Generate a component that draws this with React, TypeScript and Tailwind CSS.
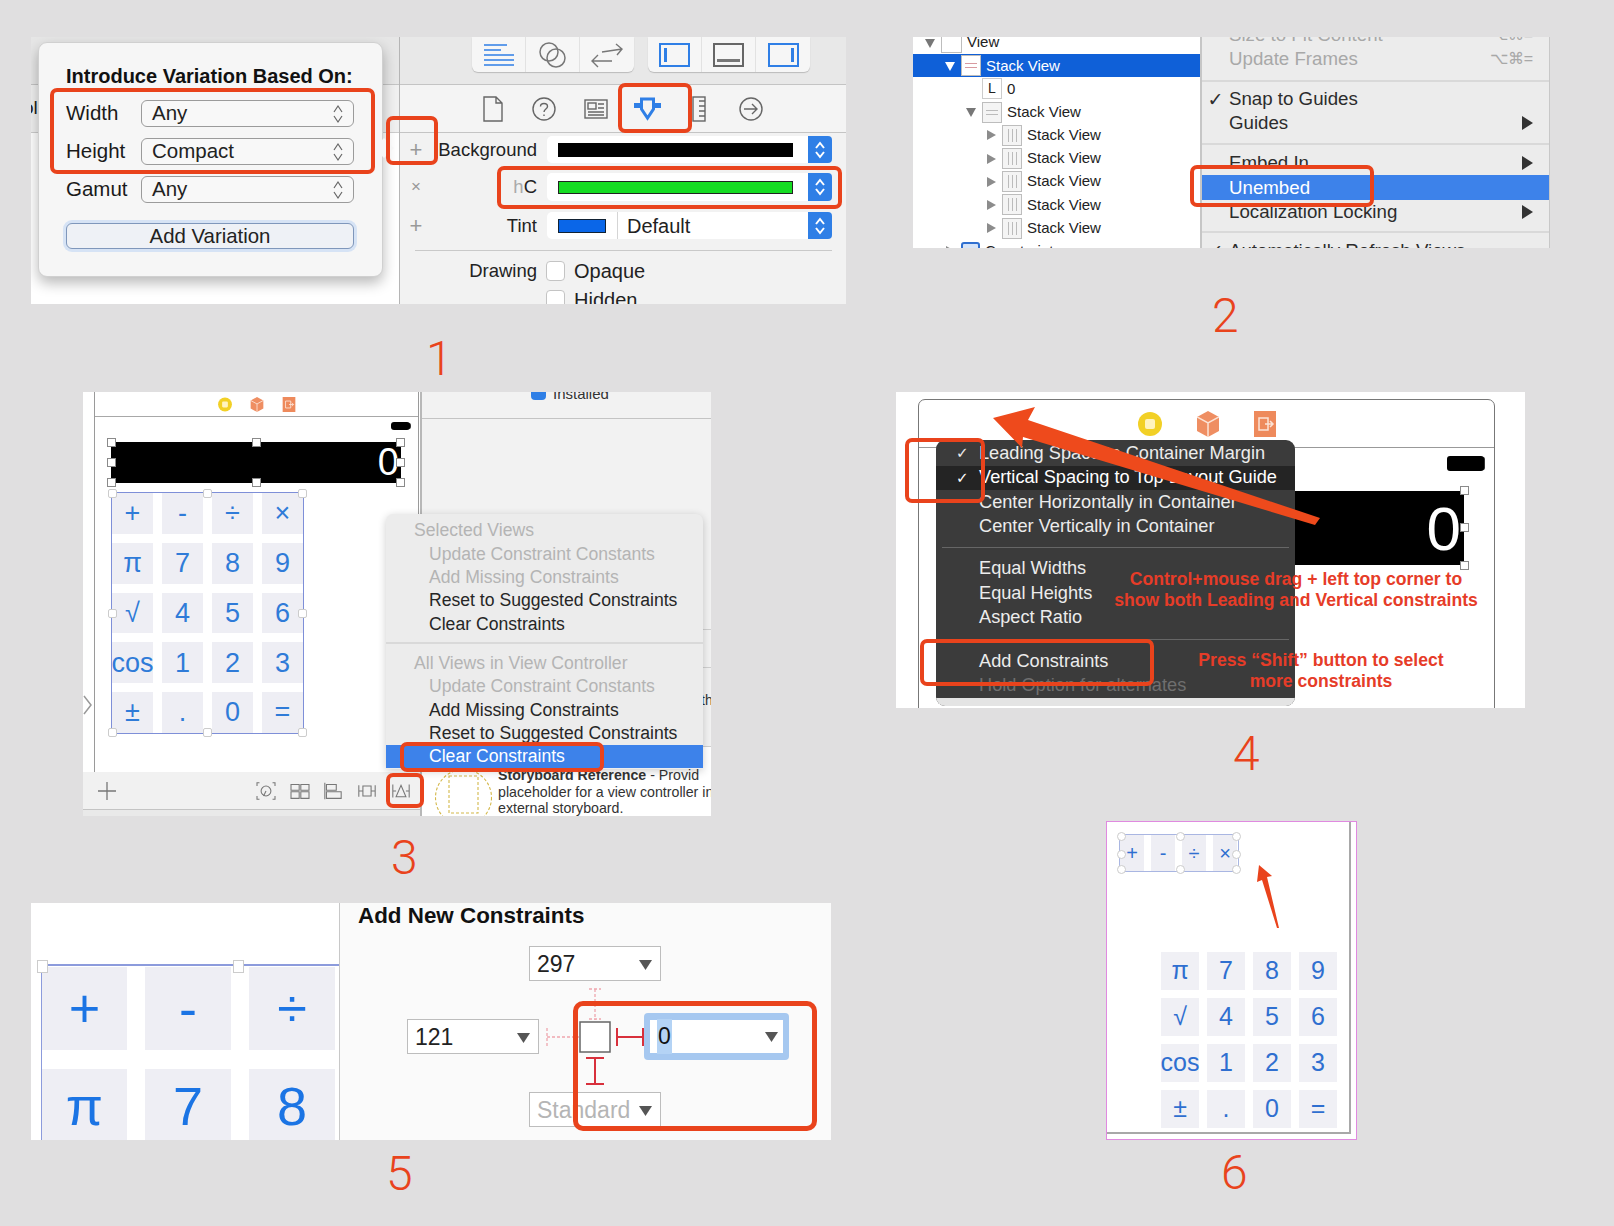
import type { ReactNode } from 'react';

const RED = '#e9431c';

// Red annotation rectangle drawn over the screenshots
function RedBox({ className }: { className: string }) {
  return <div className={`absolute border-[4px] border-[#e9431c] rounded-[7px] ${className}`} />;
}

function Handle({ className }: { className: string }) {
  return <div className={`absolute w-[9px] h-[9px] bg-white border border-[#8a8a8a] ${className}`} />;
}

function Triangle({ dir, color = '#777' }: { dir: 'down' | 'right'; color?: string }) {
  return (
    <svg width="12" height="12" viewBox="0 0 12 12" className="shrink-0">
      <polygon points={dir === 'down' ? '1,2 11,2 6,11' : '2,1 11,6 2,11'} fill={color} />
    </svg>
  );
}

function Stepper() {
  return (
    <div className="w-[24px] h-full bg-[#2f7fe6] rounded-r-[4px] flex items-center justify-center">
      <svg width="12" height="20" viewBox="0 0 12 20" fill="none" stroke="white" strokeWidth="2">
        <path d="M2 8 L6 3 L10 8" />
        <path d="M2 12 L6 17 L10 12" />
      </svg>
    </div>
  );
}

function UpDown() {
  return (
    <svg width="12" height="20" viewBox="0 0 12 20" fill="none" stroke="#666" strokeWidth="1.2">
      <path d="M2 8 L6 2 L10 8" />
      <path d="M2 12 L6 18 L10 12" />
    </svg>
  );
}

function VarRow({ label, value }: { label: string; value: string }) {
  return (
    <div className="flex items-center h-[27px]">
      <span className="w-[75px] text-[20.5px] text-[#1a1a1a]">{label}</span>
      <div className="w-[213px] h-full flex items-center justify-between pl-[10px] pr-[9px] bg-[#f8f8f8] border border-[#9b9b9b] rounded-[6px] text-[20.5px] text-[#222]">
        {value}
        <UpDown />
      </div>
    </div>
  );
}

function Panel1() {
  const tool = 'w-[54px] h-full flex items-center justify-center border-r border-[#e2e2e2] last:border-r-0';
  const tab = 'w-[51.6px] flex items-center justify-center';
  return (
    <div className="absolute left-[31px] top-[37px] w-[815px] h-[267px] overflow-hidden bg-white flex">
      <div className="w-[368px] flex flex-col">
        <div className="h-[48px] bg-[#e6e6e6] border-b border-[#c4c4c4]" />
        <div className="h-[48px] bg-[#f0f0f0] border-b border-[#cdcdcd] flex items-center text-[19px] text-[#222] -ml-[8px]">ol</div>
        <div className="flex-1 bg-white" />
      </div>
      <div className="flex-1 border-l border-[#b5b5b5] flex flex-col bg-[#f2f2f2]">
        <div className="h-[48px] shrink-0 bg-[#e8e8e8] border-b border-[#c4c4c4] flex gap-[14px] pl-[72px] items-start">
          <div className="h-[35px] flex bg-[#f6f6f6] rounded-b-[6px] shadow-[0_1px_1px_#bbb]">
            <div className={tool}>
              <svg width="32" height="24" viewBox="0 0 32 24" stroke="#2f7fe6" strokeWidth="1.6" fill="none">
                <path d="M1 2 H24 M1 7 H18 M1 12 H31 M1 17 H31 M1 22 H31" />
              </svg>
            </div>
            <div className={tool}>
              <svg width="30" height="28" viewBox="0 0 30 28" stroke="#777" strokeWidth="1.5" fill="none">
                <circle cx="11" cy="11" r="9" />
                <circle cx="18" cy="17" r="9" />
              </svg>
            </div>
            <div className={tool}>
              <svg width="32" height="26" viewBox="0 0 32 26" stroke="#777" strokeWidth="1.4" fill="none">
                <path d="M31 7 L11 10 M25 2 L31 7 L26 13 M1 19 L21 19 M7 13 L1 19 L7 25" />
              </svg>
            </div>
          </div>
          <div className="h-[35px] flex bg-[#f6f6f6] rounded-b-[6px] shadow-[0_1px_1px_#bbb]">
            <div className={tool}>
              <div className="w-[31px] h-[24px] border-2 border-[#2f7fe6] flex">
                <div className="w-[3px] bg-[#2f7fe6] ml-[3px] my-[3px]" />
              </div>
            </div>
            <div className={tool}>
              <div className="w-[31px] h-[24px] border-2 border-[#666] flex items-end">
                <div className="w-full h-[3px] bg-[#777] mx-[2px] mb-[3px]" />
              </div>
            </div>
            <div className={tool}>
              <div className="w-[31px] h-[24px] border-2 border-[#2f7fe6] flex justify-end">
                <div className="w-[3px] bg-[#2f7fe6] mr-[3px] my-[3px]" />
              </div>
            </div>
          </div>
        </div>
        <div className="h-[48px] shrink-0 bg-[#f4f4f4] border-b border-[#c4c4c4] flex pl-[67px]">
          <div className={tab}>
            <svg width="20" height="26" viewBox="0 0 20 26" fill="none" stroke="#666" strokeWidth="1.4">
              <path d="M1 1 H13 L19 7 V25 H1 Z M13 1 V7 H19" />
            </svg>
          </div>
          <div className={tab}>
            <svg width="24" height="24" viewBox="0 0 24 24" fill="none" stroke="#666" strokeWidth="1.4">
              <circle cx="12" cy="12" r="11" />
              <path d="M8.5 9.5 C8.5 5.5 15.5 5.5 15.5 9.5 C15.5 12 12 12 12 15 M12 17.5 V19" />
            </svg>
          </div>
          <div className={tab}>
            <svg width="24" height="20" viewBox="0 0 24 20" fill="none" stroke="#666" strokeWidth="1.4">
              <rect x="1" y="1" width="22" height="18" />
              <rect x="4" y="4" width="8" height="6" />
              <path d="M14 5 H20 M14 9 H20 M4 13 H20 M4 16 H20" />
            </svg>
          </div>
          <div className={tab}>
            <svg width="27" height="24" viewBox="0 0 27 24">
              <path d="M0 6 H7 V11 H0 Z M20 6 H27 V11 H20 Z" fill="#2f7fe6" />
              <path d="M7.5 2 H19.5 V12 L13.5 21 L7.5 12 Z" fill="#f4f4f4" stroke="#2f7fe6" strokeWidth="3" />
            </svg>
          </div>
          <div className={tab}>
            <svg width="14" height="26" viewBox="0 0 14 26" fill="none" stroke="#666" strokeWidth="1.4">
              <rect x="1" y="1" width="12" height="24" />
              <path d="M7 5 H13 M7 10 H13 M7 15 H13 M7 20 H13" />
            </svg>
          </div>
          <div className={tab}>
            <svg width="24" height="24" viewBox="0 0 24 24" fill="none" stroke="#666" strokeWidth="1.4">
              <circle cx="12" cy="12" r="11" />
              <path d="M5 12 H18 M13 7 L18 12 L13 17" />
            </svg>
          </div>
        </div>

        <div className="flex items-center h-[27px] shrink-0 mt-[3px] text-[18.5px] text-[#222]">
          <span className="w-[32px] text-center text-[#999] text-[22px]">+</span>
          <span className="w-[105px] text-right">Background</span>
          <div className="ml-[10px] w-[285px] h-full bg-white rounded-[5px] flex items-center pl-[11px]">
            <div className="w-[235px] h-[14px] bg-black" />
            <div className="ml-auto h-full"><Stepper /></div>
          </div>
        </div>
        <div className="flex items-center h-[28px] shrink-0 mt-[10px] text-[18.5px] text-[#222]">
          <span className="w-[32px] text-center text-[#999] text-[17px]">×</span>
          <span className="w-[105px] text-right"><span className="text-[#aaa]">h</span>C</span>
          <div className="ml-[10px] w-[285px] h-full bg-white rounded-[5px] flex items-center pl-[11px]">
            <div className="w-[235px] h-[13px] bg-[#15dc22] border border-[#222]" />
            <div className="ml-auto h-full"><Stepper /></div>
          </div>
        </div>
        <div className="flex items-center h-[27px] shrink-0 mt-[11px] text-[18.5px] text-[#222]">
          <span className="w-[32px] text-center text-[#999] text-[22px]">+</span>
          <span className="w-[105px] text-right">Tint</span>
          <div className="ml-[10px] w-[285px] h-full bg-white rounded-[5px] flex items-center pl-[11px]">
            <div className="w-[48px] h-[14px] bg-[#0a66e8] border border-[#123]" />
            <div className="ml-[11px] h-full border-l border-[#d5d5d5] pl-[9px] flex items-center text-[20px]">Default</div>
            <div className="ml-auto h-full"><Stepper /></div>
          </div>
        </div>
        <div className="ml-[15px] mt-[11px] w-[417px] h-[1px] shrink-0 bg-[#c9c9c9]" />
        <div className="flex items-center h-[20px] shrink-0 mt-[10px] text-[18.5px] text-[#222]">
          <span className="w-[137px] text-right">Drawing</span>
          <div className="ml-[9px] w-[19px] h-[20px] bg-white border border-[#c4c4c4] rounded-[4px]" />
          <span className="ml-[9px] text-[20px]">Opaque</span>
        </div>
        <div className="flex items-center h-[20px] shrink-0 mt-[9px] ml-[146px] text-[20px] text-[#222]">
          <div className="w-[19px] h-[20px] bg-white border border-[#c4c4c4] rounded-[4px]" />
          <span className="ml-[9px]">Hidden</span>
        </div>
      </div>

      {/* Size class popover */}
      <div className="absolute left-[7px] top-[5px] w-[345px] h-[235px] bg-[#f6f6f6] rounded-[9px] border border-[#d0d0d0] shadow-[0_6px_14px_rgba(0,0,0,0.28)] flex flex-col pl-[27px] pt-[22px]">
        <div className="text-[20px] leading-[22px] font-bold text-[#111] whitespace-nowrap">Introduce Variation Based On:</div>
        <div className="mt-[13px] flex flex-col gap-[11px]">
          <VarRow label="Width" value="Any" />
          <VarRow label="Height" value="Compact" />
          <VarRow label="Gamut" value="Any" />
        </div>
        <div className="mt-[20px] w-[288px] h-[26px] bg-[#eef1f6] border border-[#7f97bb] rounded-[6px] shadow-[0_0_0_3px_#d6e3f5] flex items-center justify-center text-[20.4px] text-[#222]">
          Add Variation
        </div>
      </div>
      <div className="absolute left-[346px] top-[104px] w-[14px] h-[14px] rotate-45 bg-[#f6f6f6]" />

      <RedBox className="left-[19px] top-[51px] w-[325px] h-[86px]" />
      <RedBox className="left-[355px] top-[79px] w-[52px] h-[49px]" />
      <RedBox className="left-[587px] top-[46px] w-[74px] h-[50px]" />
      <RedBox className="left-[466px] top-[129px] w-[345px] h-[43px]" />
    </div>
  );
}

function StackIcon({ vertical, selected }: { vertical?: boolean; selected?: boolean }) {
  return (
    <div
      className={`w-[20px] h-[21px] shrink-0 border border-[#bdbdbd] flex gap-[3px] p-[3px] ${
        vertical ? 'flex-col justify-center' : 'justify-center'
      } ${selected ? 'bg-white' : 'bg-[#f4f4f4]'}`}
    >
      <div className={`${vertical ? 'h-[1px] w-full' : 'w-[1px] h-full'} ${selected ? 'bg-[#d89aa0]' : 'bg-[#bbb]'}`} />
      <div className={`${vertical ? 'h-[1px] w-full' : 'w-[1px] h-full'} ${selected ? 'bg-[#d89aa0]' : 'bg-[#bbb]'}`} />
      {!vertical && <div className="w-[1px] h-full bg-[#bbb]" />}
    </div>
  );
}

function TreeRow({ pad, children, selected }: { pad: string; children: ReactNode; selected?: boolean }) {
  return (
    <div className={`h-[23.2px] shrink-0 flex items-center gap-[5px] text-[15px] ${pad} ${selected ? 'bg-[#0f60d8] text-white' : 'text-[#222]'}`}>
      {children}
    </div>
  );
}

function Arrow() {
  return (
    <svg width="11" height="14" viewBox="0 0 11 14" className="ml-auto">
      <polygon points="0,0 11,7 0,14" fill="#333" />
    </svg>
  );
}

function MenuRow({ children, dim, check, arrow, active }: { children: ReactNode; dim?: boolean; check?: boolean; arrow?: boolean; active?: boolean }) {
  return (
    <div
      className={`h-[24.3px] shrink-0 flex items-center pr-[16px] text-[18.7px] whitespace-nowrap ${
        active ? 'bg-[#3d82ea] text-white' : dim ? 'text-[#a8a8a8]' : 'text-[#2c2c2c]'
      }`}
    >
      <span className="w-[27px] text-center font-['DejaVu_Sans',sans-serif] font-bold text-[19px]">{check ? '✓' : ''}</span>
      {children}
      {arrow && <Arrow />}
    </div>
  );
}

function Panel2() {
  return (
    <div className="absolute left-[913px] top-[37px] w-[637px] h-[211px] overflow-hidden flex bg-white">
      <div className="w-[289px] flex flex-col -mt-[6px] border-r-2 border-[#c6c6c6] bg-white">
        <TreeRow pad="pl-[11px]">
          <Triangle dir="down" />
          <div className="w-[21px] h-[21px] bg-white border border-[#bdbdbd]" />
          View
        </TreeRow>
        <TreeRow pad="pl-[31px]" selected>
          <Triangle dir="down" color="#fff" />
          <StackIcon vertical selected />
          Stack View
        </TreeRow>
        <TreeRow pad="pl-[69px]">
          <div className="w-[20px] h-[21px] bg-white border border-[#ccc] flex items-center justify-center text-[14px]">L</div>
          0
        </TreeRow>
        <TreeRow pad="pl-[52px]">
          <Triangle dir="down" />
          <StackIcon vertical />
          Stack View
        </TreeRow>
        {[0, 1, 2, 3, 4].map((i) => (
          <TreeRow pad="pl-[72px]" key={i}>
            <Triangle dir="right" color="#8c8c8c" />
            <StackIcon />
            Stack View
          </TreeRow>
        ))}
        <TreeRow pad="pl-[31px]">
          <Triangle dir="right" color="#8c8c8c" />
          <div className="w-[19px] h-[19px] bg-[#d6e4f8] border-2 border-[#2f6fd0] rounded-[3px]" />
          Constraints
        </TreeRow>
      </div>
      <div className="flex-1 bg-[#ececec] flex flex-col -mt-[14px] border-r border-[#c8c8c8]">
        <MenuRow dim>
          Size to Fit Content<span className="ml-auto text-[16px]">⌥⌘=</span>
        </MenuRow>
        <MenuRow dim>
          Update Frames<span className="ml-auto text-[16px]">⌥⌘=</span>
        </MenuRow>
        <div className="mt-[8px] mb-[5px] h-[2px] bg-[#d9d9d9] shrink-0" />
        <MenuRow check>Snap to Guides</MenuRow>
        <MenuRow arrow>Guides</MenuRow>
        <div className="mt-[8px] mb-[6px] h-[2px] bg-[#d9d9d9] shrink-0" />
        <MenuRow arrow>Embed In</MenuRow>
        <MenuRow active>Unembed</MenuRow>
        <MenuRow arrow>Localization Locking</MenuRow>
        <div className="mt-[7px] mb-[6px] h-[2px] bg-[#d9d9d9] shrink-0" />
        <MenuRow check>Automatically Refresh Views</MenuRow>
      </div>
      <RedBox className="left-[277px] top-[128px] w-[184px] h-[42px]" />
    </div>
  );
}

const CALC_TOP = ['+', '-', '÷', '×'];
const CALC_BODY = ['π', '7', '8', '9', '√', '4', '5', '6', 'cos', '1', '2', '3', '±', '.', '0', '='];

function DeviceDots({ big }: { big?: boolean }) {
  return (
    <div className={`flex justify-center items-center ${big ? 'gap-[35px]' : 'gap-[18px]'}`}>
      <svg width={big ? 24 : 14} height={big ? 26 : 15} viewBox="0 0 24 26">
        <circle cx="12" cy="13" r="12" fill="#f2d026" />
        <rect x="7" y="8" width="10" height="10" rx="2" fill="#fff3c0" />
      </svg>
      <svg width={big ? 22 : 14} height={big ? 26 : 15} viewBox="0 0 22 26">
        <polygon points="11,0 22,6 22,20 11,26 0,20 0,6" fill="#ef8e62" />
        <path d="M0 6 L11 12 L22 6 M11 12 V26" stroke="#fbe3d6" strokeWidth="1.5" fill="none" />
      </svg>
      <svg width={big ? 22 : 14} height={big ? 26 : 15} viewBox="0 0 22 26">
        <rect width="22" height="26" fill="#ee8a5c" />
        <path d="M5 7 H14 V19 H5 Z M11 13 H19 M16 10 L19 13 L16 16" stroke="#fbe3d6" strokeWidth="1.5" fill="none" />
      </svg>
    </div>
  );
}

function Battery({ className }: { className: string }) {
  return <div className={`bg-black rounded-[3px] shadow-[2px_0_0_-1px_#333] ${className}`} />;
}

function BarIcon({ children }: { children: ReactNode }) {
  return (
    <div className="w-[33.7px] flex items-center justify-center">
      <svg width="20" height="18" viewBox="0 0 24 22" fill="none" stroke="#777" strokeWidth="1.3">
        {children}
      </svg>
    </div>
  );
}

function MenuLine({ children, dim, indent }: { children: ReactNode; dim?: boolean; indent?: boolean }) {
  return (
    <div className={`h-[23.3px] flex items-center text-[17.6px] whitespace-nowrap ${indent ? 'pl-[43px]' : 'pl-[28px]'} ${dim ? 'text-[#b4b4b4]' : 'text-[#262626]'}`}>
      {children}
    </div>
  );
}

function Panel3() {
  return (
    <div className="absolute left-[83px] top-[392px] w-[628px] h-[424px] overflow-hidden bg-white flex">
      <div className="w-[337px] shrink-0 flex flex-col">
        <div className="h-[380px] ml-[11px] mr-[1px] border-l border-r border-[#9a9a9a] bg-white">
          <div className="h-[25px] border-b border-[#a8a8a8] flex items-center justify-center">
            <DeviceDots />
          </div>
          <div className="flex justify-end pr-[8px] pt-[5px]">
            <Battery className="w-[19px] h-[8px]" />
          </div>
          <div className="relative ml-[16px] mt-[12px] w-[290px] h-[41px] bg-black flex items-center justify-end pr-[2px] text-white text-[38px] font-light">
            0
            <Handle className="-left-[4px] -top-[4px]" />
            <Handle className="left-[141px] -top-[4px]" />
            <Handle className="-right-[4px] -top-[4px]" />
            <Handle className="-left-[4px] top-[16px]" />
            <Handle className="-right-[4px] top-[16px]" />
            <Handle className="-left-[4px] -bottom-[4px]" />
            <Handle className="left-[141px] -bottom-[4px]" />
            <Handle className="-right-[4px] -bottom-[4px]" />
          </div>
          <div className="relative ml-[16px] mt-[9px] w-[193px] h-[242px] border border-[#7e8fd8]">
            <div className="grid grid-cols-[repeat(4,41px)] auto-rows-[40.8px] gap-[9px] text-[27px] text-[#2f7bd8]">
              {[...CALC_TOP, ...CALC_BODY].map((k) => (
                <div key={k} className="bg-[#eeeef4] flex items-center justify-center whitespace-nowrap">{k}</div>
              ))}
            </div>
            <Handle className="-left-[4px] -top-[4px] rounded-[2px] border-[#ccc]" />
            <Handle className="left-[91px] -top-[4px] rounded-[2px] border-[#ccc]" />
            <Handle className="-right-[4px] -top-[4px] rounded-[2px] border-[#ccc]" />
            <Handle className="-left-[4px] top-[116px] rounded-[2px] border-[#ccc]" />
            <Handle className="-right-[4px] top-[116px] rounded-[2px] border-[#ccc]" />
            <Handle className="-left-[4px] -bottom-[4px] rounded-[2px] border-[#ccc]" />
            <Handle className="left-[91px] -bottom-[4px] rounded-[2px] border-[#ccc]" />
            <Handle className="-right-[4px] -bottom-[4px] rounded-[2px] border-[#ccc]" />
          </div>
        </div>
        <div className="h-[38px] bg-[#f1f1f1] border-b border-[#c4c4c4] flex items-center pl-[15px]">
          <svg width="18" height="18" viewBox="0 0 18 18" stroke="#777" strokeWidth="1.3">
            <path d="M9 0 V18 M0 9 H18" />
          </svg>
          <div className="ml-[133px] flex">
            <BarIcon>
              <path d="M4 1 H1 V5 M20 1 H23 V5 M4 21 H1 V17 M20 21 H23 V17" />
              <circle cx="12" cy="11" r="6" />
              <path d="M12 11 L9 17" />
            </BarIcon>
            <BarIcon>
              <path d="M1 3 H11 V10 H1 Z M13 3 H23 V10 H13 Z M1 12 H11 V20 H1 Z M13 12 H23 V20 H13 Z" />
            </BarIcon>
            <BarIcon>
              <path d="M2 1 V21 M4 3 H16 V10 H4 Z M4 12 H22 V20 H4 Z" />
            </BarIcon>
            <BarIcon>
              <path d="M2 4 V18 M22 4 V18 M2 11 H7 M17 11 H22 M7 5 H17 V17 H7 Z" />
            </BarIcon>
            <BarIcon>
              <path d="M2 3 V19 M22 3 V19 M2 11 H6 M18 11 H22 M12 4 L18 18 H6 Z" />
            </BarIcon>
          </div>
        </div>
        <div className="flex-1 bg-[#e9e9e9]" />
      </div>

      <div className="flex-1 flex flex-col border-l-2 border-[#b8b8b8] bg-[#f2f2f2]">
        <div className="h-[27px] shrink-0 border-b border-[#c4c4c4] overflow-hidden flex gap-[7px] pl-[109px] items-start text-[15px] text-[#333]">
          <div className="w-[15px] h-[15px] -mt-[7px] rounded-[4px] bg-[#2f7fe6]" />
          <span className="-mt-[9px]">Installed</span>
        </div>
        <div className="h-[211px] shrink-0 border-b border-[#d0d0d0]" />
        <div className="h-[38px] shrink-0 border-b border-[#d0d0d0]" />
        <div className="h-[79px] shrink-0 border-b border-[#d0d0d0] pl-[279px] pt-[22px] text-[14px] text-[#333]">th</div>
        <div className="flex-1 bg-white flex gap-[6px] pl-[13px] pt-[20px] whitespace-nowrap">
          <svg width="57" height="57" viewBox="0 0 57 57" className="shrink-0 mt-[2px]" fill="none" stroke="#d4b84a" strokeWidth="1.1">
            <circle cx="28.5" cy="28.5" r="28" strokeDasharray="3 2" />
            <rect x="14" y="7" width="29" height="37" strokeDasharray="3 2" />
          </svg>
          <div className="text-[14.2px] leading-[16.5px] text-[#333]">
            <div><span className="font-bold">Storyboard Reference</span> - Provid</div>
            <div>placeholder for a view controller in</div>
            <div>external storyboard.</div>
          </div>
        </div>
      </div>

      {/* Resolve auto layout issues menu */}
      <div className="absolute left-[303px] top-[122px] w-[317px] h-[255px] bg-[#ececec] rounded-t-[7px] shadow-[0_2px_8px_rgba(0,0,0,0.2)] flex flex-col pt-[5px]">
        <MenuLine dim>Selected Views</MenuLine>
        <MenuLine dim indent>Update Constraint Constants</MenuLine>
        <MenuLine dim indent>Add Missing Constraints</MenuLine>
        <MenuLine indent>Reset to Suggested Constraints</MenuLine>
        <MenuLine indent>Clear Constraints</MenuLine>
        <div className="my-[7px] h-[2px] bg-[#d9d9d9]" />
        <MenuLine dim>All Views in View Controller</MenuLine>
        <MenuLine dim indent>Update Constraint Constants</MenuLine>
        <MenuLine indent>Add Missing Constraints</MenuLine>
        <MenuLine indent>Reset to Suggested Constraints</MenuLine>
        <div className="h-[23.3px] flex items-center pl-[43px] text-[17.6px] text-white bg-[#3d82ea]">Clear Constraints</div>
      </div>
      <svg width="10" height="20" viewBox="0 0 10 20" className="absolute left-0 top-[303px]" fill="none" stroke="#999" strokeWidth="1.5">
        <path d="M1 1 L8 10 L1 19" />
      </svg>
      <RedBox className="left-[317px] top-[350px] w-[204px] h-[30px]" />
      <RedBox className="left-[303px] top-[381px] w-[38px] h-[35px]" />
    </div>
  );
}

function DarkRow({ children, check, active, dim }: { children: ReactNode; check?: boolean; active?: boolean; dim?: boolean }) {
  return (
    <div
      className={`h-[24.6px] shrink-0 flex items-center text-[18.2px] whitespace-nowrap ${active ? 'bg-[#242424] text-white' : dim ? 'text-[#6f6f6f]' : 'text-[#ececec]'}`}
    >
      <span className="w-[43px] pl-[20px] font-['DejaVu_Sans',sans-serif] text-[15px]">{check ? '✓' : ''}</span>
      {children}
    </div>
  );
}

function Panel4() {
  return (
    <div className="absolute left-[896px] top-[392px] w-[629px] h-[316px] overflow-hidden bg-white">
      <div className="ml-[22px] mt-[7px] w-[577px] h-[400px] border border-[#777] rounded-t-[7px]">
        <div className="h-[48px] border-b border-[#999] flex items-center justify-center">
          <DeviceDots big />
        </div>
        <div className="flex justify-end pr-[10px] pt-[8px]">
          <Battery className="w-[37px] h-[15px]" />
        </div>
        <div className="flex justify-end pr-[30px] mt-[20px]">
          <div className="relative w-[300px] h-[74px] bg-black flex items-center justify-end pr-[3px] text-white text-[62px] font-light">
            0
            <Handle className="-right-[5px] -top-[5px]" />
            <Handle className="-right-[5px] top-[32px]" />
            <Handle className="-right-[5px] -bottom-[5px]" />
          </div>
        </div>
      </div>

      {/* Control-drag constraint menu */}
      <div className="absolute left-[40px] top-[48px] w-[359px] h-[266px] bg-[#3b3b3b] rounded-[9px] overflow-hidden flex flex-col pt-[1px]">
        <DarkRow check>Leading Space to Container Margin</DarkRow>
        <DarkRow check active>Vertical Spacing to Top Layout Guide</DarkRow>
        <DarkRow>Center Horizontally in Container</DarkRow>
        <DarkRow>Center Vertically in Container</DarkRow>
        <div className="mx-[6px] mt-[8px] mb-[8px] h-[1px] bg-[#666] shrink-0" />
        <DarkRow>Equal Widths</DarkRow>
        <DarkRow>Equal Heights</DarkRow>
        <DarkRow>Aspect Ratio</DarkRow>
        <div className="mx-[6px] mt-[9px] mb-[9px] h-[1px] bg-[#666] shrink-0" />
        <DarkRow>Add Constraints</DarkRow>
        <DarkRow dim>Hold Option for alternates</DarkRow>
        <div className="mt-auto h-[8px] bg-[#e4e4e4] shrink-0" />
      </div>

      <svg width="629" height="316" className="absolute left-0 top-0">
        <polygon points="97,26 139,15 132,28 424,126 419,133 127,45 126,56" fill="#ee4a1c" />
      </svg>
      <RedBox className="left-[9px] top-[46px] w-[80px] h-[65px]" />
      <RedBox className="left-[24px] top-[247px] w-[234px] h-[47px]" />

      <div className="absolute left-[200px] top-[177px] w-[400px] text-center text-[#e63c28] text-[17.6px] leading-[21px] font-bold whitespace-nowrap">
        <div>Control+mouse drag + left top corner to</div>
        <div>show both Leading and Vertical constraints</div>
      </div>
      <div className="absolute left-[300px] top-[258px] w-[250px] text-center text-[#e63c28] text-[17.6px] leading-[21px] font-bold whitespace-nowrap">
        <div>Press “Shift” button to select</div>
        <div>more constraints</div>
      </div>
    </div>
  );
}

function Dropdown({ value, dim, className }: { value: string; dim?: boolean; className: string }) {
  return (
    <div className={`w-[132px] h-[35px] shrink-0 bg-white border border-[#bdbdbd] flex items-center justify-between pl-[7px] pr-[8px] pt-[2px] text-[23px] ${dim ? 'text-[#b5b5b5]' : 'text-[#222]'} ${className}`}>
      {value}
      <svg width="13" height="10" viewBox="0 0 13 10">
        <polygon points="0,0 13,0 6.5,10" fill="#555" />
      </svg>
    </div>
  );
}

function Panel5() {
  return (
    <div className="absolute left-[31px] top-[903px] w-[800px] h-[237px] overflow-hidden flex bg-white">
      <div className="w-[309px] shrink-0 pt-[61px] pl-[10px] border-r border-[#c8c8c8] shadow-[2px_0_6px_rgba(0,0,0,0.12)] overflow-hidden">
        <div className="relative h-[190px] w-[320px] border-l border-t-2 border-[#8c9bdc] pt-[1px]">
          <div className="grid grid-cols-[85px_86px_86px] grid-rows-[83px_75px] gap-x-[18px] gap-y-[19px] text-[54px] text-[#1b74e4]">
            {['+', '-', '÷', 'π', '7', '8'].map((k) => (
              <div key={k} className="bg-[#eeeef4] flex items-center justify-center">{k}</div>
            ))}
          </div>
          <Handle className="-left-[5px] -top-[6px] w-[11px] h-[13px] border-[#ccc]" />
          <Handle className="left-[191px] -top-[6px] w-[11px] h-[13px] border-[#ccc]" />
        </div>
      </div>
      <div className="flex-1 bg-[#fafafa] flex flex-col">
        <div className="pl-[18px] text-[22.4px] leading-[26px] font-bold text-[#111]">Add New Constraints</div>
        <Dropdown value="297" className="ml-[189px] mt-[17px]" />
        <div className="flex items-center h-[47px] mt-[32px] ml-[67px]">
          <Dropdown value="121" className="" />
          <svg width="105" height="47" viewBox="0 0 105 47" className="shrink-0 overflow-visible" fill="none">
            <rect x="41" y="9" width="30" height="30" fill="#fff" stroke="#666" strokeWidth="1.5" />
            <path d="M50 -24 H62 M56 -24 V7 M50 6 H62" stroke="#efa7ae" strokeWidth="1.3" strokeDasharray="3 2" />
            <path d="M8 15 V33 M8 24 H40" stroke="#efa7ae" strokeWidth="1.3" strokeDasharray="3 2" />
            <path d="M78 15 V33 M78 24 H104 M104 15 V33" stroke="#d8303c" strokeWidth="2" />
            <path d="M47 45 H65 M56 45 V71 M47 71 H65" stroke="#d8303c" strokeWidth="2" />
          </svg>
          <div className="w-[145px] h-[47px] shrink-0 bg-[#a6c8f0] rounded-[4px] px-[6px] py-[7px]">
            <div className="h-full bg-white flex items-center justify-between pl-[7px] pr-[5px] text-[23px] text-[#111]">
              <span className="bg-[#b4d3f5] px-[1px]">0</span>
              <svg width="13" height="10" viewBox="0 0 13 10">
                <polygon points="0,0 13,0 6.5,10" fill="#555" />
              </svg>
            </div>
          </div>
        </div>
        <Dropdown value="Standard" dim className="ml-[189px] mt-[32px]" />
      </div>
      <RedBox className="left-[542px] top-[98px] w-[244px] h-[130px] border-[5px] rounded-[10px]" />
    </div>
  );
}

function Panel6() {
  return (
    <div className="absolute left-[1106px] top-[821px] w-[251px] h-[319px] border border-[#e08ae0] bg-white">
      <div className="w-[244px] h-[312px] border-r-2 border-b-2 border-[#a8a8a8] pt-[12px]">
        <div className="relative ml-[12px] w-[120px] h-[38px] border border-[#a9b6e2]">
          <div className="grid grid-cols-[repeat(4,24px)] gap-[7px] h-full text-[20px] text-[#2f6fd0]">
            {CALC_TOP.map((k) => (
              <div key={k} className="bg-[#eeeef4] flex items-center justify-center">{k}</div>
            ))}
          </div>
          <Handle className="-left-[3px] -top-[3px] w-[6px] h-[6px] rounded-full border-[#ccc]" />
          <Handle className="left-[56px] -top-[3px] w-[6px] h-[6px] rounded-full border-[#ccc]" />
          <Handle className="-right-[3px] -top-[3px] w-[6px] h-[6px] rounded-full border-[#ccc]" />
          <Handle className="-left-[3px] top-[15px] w-[6px] h-[6px] rounded-full border-[#ccc]" />
          <Handle className="-right-[3px] top-[15px] w-[6px] h-[6px] rounded-full border-[#ccc]" />
          <Handle className="-left-[3px] -bottom-[3px] w-[6px] h-[6px] rounded-full border-[#ccc]" />
          <Handle className="left-[56px] -bottom-[3px] w-[6px] h-[6px] rounded-full border-[#ccc]" />
          <Handle className="-right-[3px] -bottom-[3px] w-[6px] h-[6px] rounded-full border-[#ccc]" />
        </div>
        <div className="ml-[54px] mt-[80px] grid grid-cols-[repeat(4,38px)] auto-rows-[38px] gap-[8px] text-[25px] text-[#2f6fd0]">
          {CALC_BODY.map((k) => (
            <div key={k} className="bg-[#f0f0f5] flex items-center justify-center whitespace-nowrap">{k}</div>
          ))}
        </div>
      </div>
      <svg width="40" height="70" viewBox="0 0 40 70" className="absolute left-[145px] top-[40px]">
        <polygon points="7,3 20,14 15,15 27,66 25,66 10,18 5,20" fill={RED} />
      </svg>
    </div>
  );
}

export default function App() {
  const num = "absolute font-['Roboto',sans-serif] font-light text-[48px] leading-[56px] text-[#e9431c]";
  return (
    <div className="relative w-[1614px] h-[1226px] overflow-hidden bg-[#e0dfe0] font-['Liberation_Sans',sans-serif]">
      <Panel1 />
      <Panel2 />
      <Panel3 />
      <Panel4 />
      <Panel5 />
      <Panel6 />
      <span className={`${num} left-[426px] top-[331px]`}>1</span>
      <span className={`${num} left-[1212px] top-[288px]`}>2</span>
      <span className={`${num} left-[391px] top-[830px]`}>3</span>
      <span className={`${num} left-[1233px] top-[726px]`}>4</span>
      <span className={`${num} left-[386px] top-[1146px]`}>5</span>
      <span className={`${num} left-[1221px] top-[1145px]`}>6</span>
    </div>
  );
}
